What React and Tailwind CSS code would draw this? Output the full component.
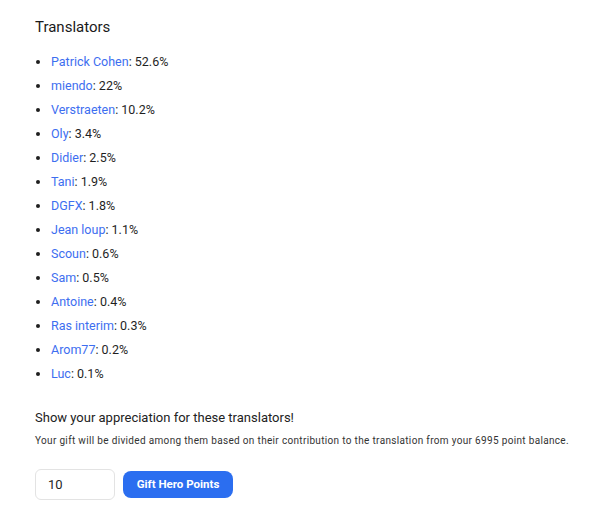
const TRANSLATORS = [
  ["Patrick Cohen", "52.6%"],
  ["miendo", "22%"],
  ["Verstraeten", "10.2%"],
  ["Oly", "3.4%"],
  ["Didier", "2.5%"],
  ["Tani", "1.9%"],
  ["DGFX", "1.8%"],
  ["Jean loup", "1.1%"],
  ["Scoun", "0.6%"],
  ["Sam", "0.5%"],
  ["Antoine", "0.4%"],
  ["Ras interim", "0.3%"],
  ["Arom77", "0.2%"],
  ["Luc", "0.1%"],
];

export default function App() {
  return (
    <div className="min-h-[522px] bg-white pt-[17px] pl-[35px] text-[#1f1f1f] font-['Roboto',sans-serif]">
      <h2 className="text-[15px] leading-5 font-normal text-[#1a1a1a]">Translators</h2>

      <ul className="mt-[13px] list-disc pl-4 text-[12.5px]">
        {TRANSLATORS.map(([name, pct]) => (
          <li key={name} className="leading-6">
            <a href="#" className="text-[#3d6ef0]">{name}</a>
            <span>: {pct}</span>
          </li>
        ))}
      </ul>

      <p className="mt-[22px] text-[13px] leading-5 text-[#222]">Show your appreciation for these translators!</p>
      <p className="mt-[5px] text-[10px] leading-4 tracking-[0.33px] text-[#333]">
        Your gift will be divided among them based on their contribution to the translation from your 6995 point balance.
      </p>

      <div className="mt-5 flex items-center gap-2">
        <input
          type="text"
          defaultValue="10"
          className="h-[31px] w-20 rounded-md border border-[#e3e3e3] px-3 text-[13px] outline-none"
        />
        <button className="h-[27px] w-[110px] rounded-lg bg-[#2b6ef0] text-[11.5px] font-bold text-white">
          Gift Hero Points
        </button>
      </div>
    </div>
  );
}
